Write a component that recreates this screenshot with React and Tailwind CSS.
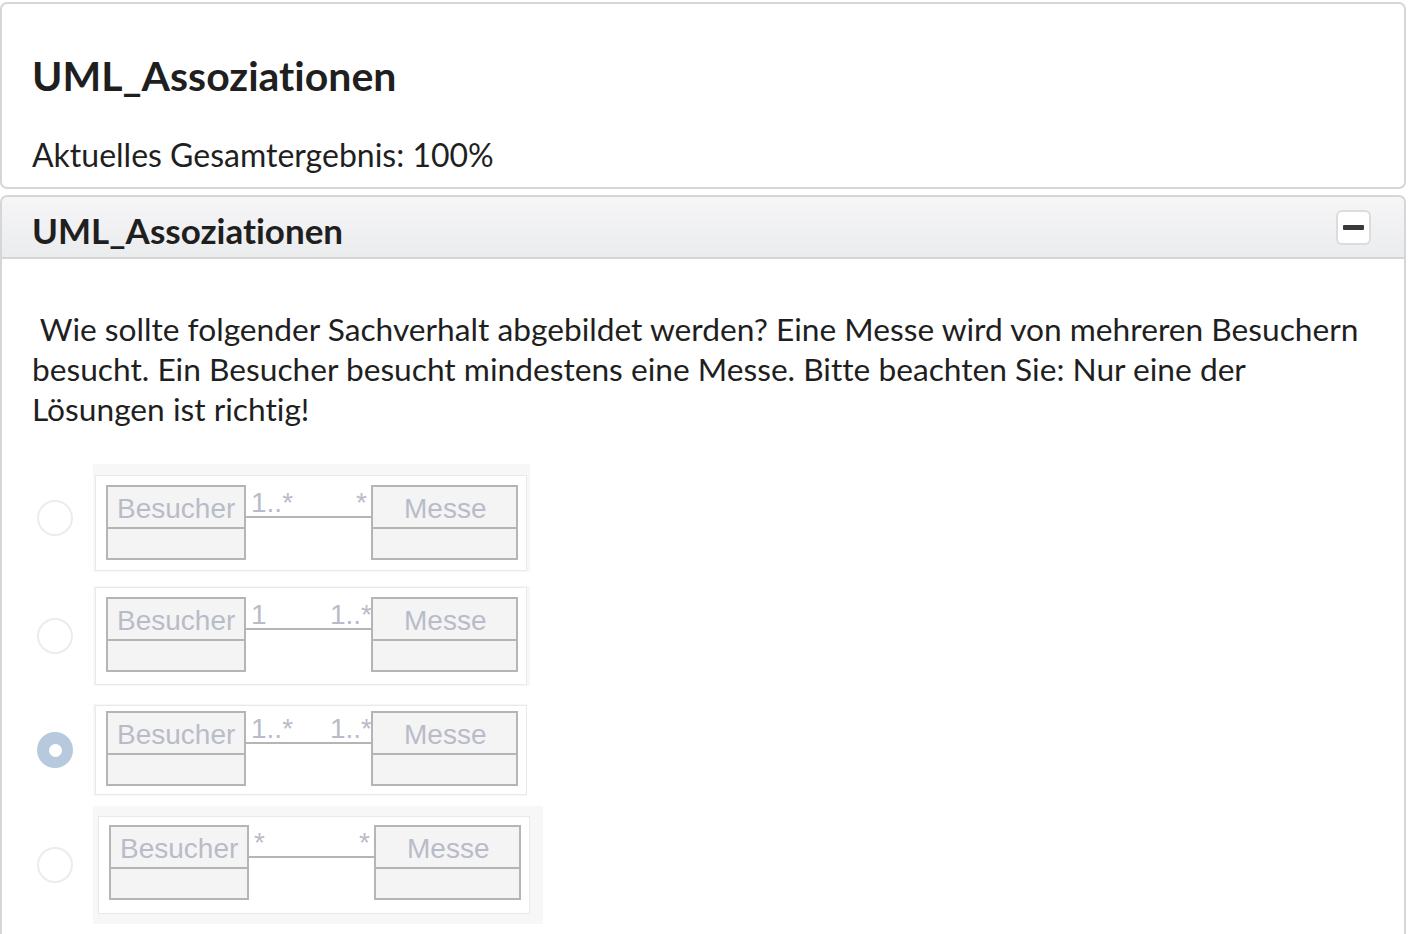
import { useState } from 'react';

const font = 'Liberation Sans, Arial, sans-serif';

const options = [
   { left: '1..*', right: '*', h: 96, boxY: 11, box: 'pt-[11px] pb-[1px] pl-[2px] w-[437px]', mt: 'mt-0' },
   { left: '1', right: '1..*', h: 98, boxY: 11, box: 'pt-[1px] pb-[1px] pl-[2px] w-[437px]', mt: 'mt-[14px]' },
   { left: '1..*', right: '1..*', h: 90, boxY: 7, box: 'pt-[1px] pb-[1px] pl-[2px] w-[434px]', mt: 'mt-[18px]' },
   { left: '*', right: '*', h: 98, boxY: 10, box: 'pt-[10px] pb-[10px] pl-[5px] w-[450px]', mt: 'mt-[10px]' },
];

function Diagram({ left, right, h, boxY }) {
   const y = boxY;
   return (
      <svg width="432" height={h} viewBox={`0 0 432 ${h}`} className="block">
         <rect x="0.5" y="0.5" width="431" height={h - 1} fill="#ffffff" stroke="#e9e9e9" />
         <rect x="12" y={y} width="138" height="73" fill="#f4f4f4" stroke="#b5b5b5" strokeWidth="2" />
         <line x1="12" y1={y + 42} x2="150" y2={y + 42} stroke="#b5b5b5" strokeWidth="2" />
         <rect x="277" y={y} width="145" height="73" fill="#f4f4f4" stroke="#b5b5b5" strokeWidth="2" />
         <line x1="277" y1={y + 42} x2="422" y2={y + 42} stroke="#b5b5b5" strokeWidth="2" />
         <line x1="150" y1={y + 31} x2="277" y2={y + 31} stroke="#b5b5b5" strokeWidth="2" />
         <text x="22" y={y + 32} fontFamily={font} fontSize="28" fill="#b9bcc8">Besucher</text>
         <text x="309" y={y + 32} fontFamily={font} fontSize="28" fill="#b9bcc8">Messe</text>
         <text x="156" y={y + 26} fontFamily={font} fontSize="28" fill="#b9bcc8">{left}</text>
         <text x={right.length > 1 ? 277 : 272} y={y + 26} textAnchor="end" fontFamily={font} fontSize="28" fill="#b9bcc8">{right}</text>
      </svg>
   );
}

function Radio({ checked, onClick }) {
   return (
      <button onClick={onClick} className="w-[36px] h-[36px] shrink-0 rounded-full flex items-center justify-center">
         {checked ? (
            <span className="w-[36px] h-[36px] rounded-full bg-[#b7c9dd] flex items-center justify-center">
               <span className="w-[13px] h-[13px] rounded-full bg-white"></span>
            </span>
         ) : (
            <span className="w-[36px] h-[36px] rounded-full border-2 border-[#ececec] bg-white"></span>
         )}
      </button>
   );
}

export default function App() {
   const [selected, setSelected] = useState(2);
   const [open, setOpen] = useState(true);

   return (
      <div className="w-[1416px] h-[934px] overflow-hidden bg-white text-[#1f1f1f] font-['Lato','Open_Sans',sans-serif] [font-variant-ligatures:none] [font-feature-settings:'liga'_0]">
         <div className="mt-[2px] w-[1406px] h-[187px] border-2 border-[#d6d6d6] rounded-[7px] pl-[30px] pt-[48px]">
            <h1 className="text-[41px] font-bold leading-[48px]">UML_Assoziationen</h1>
            <p className="mt-[36px] text-[32px] leading-[38px]">Aktuelles Gesamtergebnis: 100%</p>
         </div>

         <div className="mt-[6px] w-[1406px]">
            <div className="h-[64px] border-2 border-[#d6d6d6] rounded-t-[7px] bg-gradient-to-b from-[#f6f6f7] to-[#ebecee] flex items-center justify-between pl-[30px] pr-[33px]">
               <h2 className="text-[35px] font-bold leading-[40px] pt-[6px]">UML_Assoziationen</h2>
               <button onClick={() => setOpen(!open)} className="w-[35px] h-[35px] bg-white border-2 border-[#dcdcdc] rounded-[6px] flex items-center justify-center">
                  <span className="w-[21px] h-[5px] rounded-[1px] bg-[#3a3a3a]"></span>
               </button>
            </div>
            {open && (
               <div className="border-x-2 border-[#d6d6d6] h-[700px] pl-[30px] pr-[30px] pt-[50px]">
                  <p className="text-[31.7px] leading-[40px]">&nbsp;Wie sollte folgender Sachverhalt abgebildet werden? Eine Messe wird von mehreren Besuchern besucht. Ein Besucher besucht mindestens eine Messe. Bitte beachten Sie: Nur eine der Lösungen ist richtig!</p>
                  <div className="mt-[35px] flex flex-col">
                     {options.map((o, i) => (
                        <div key={i} className={`flex items-center ${o.mt}`}>
                           <div className="w-[61px] pl-[5px]">
                              <Radio checked={selected === i} onClick={() => setSelected(i)} />
                           </div>
                           <div className={`bg-[#f7f7f7] ${o.box}`}>
                              <Diagram left={o.left} right={o.right} h={o.h} boxY={o.boxY} />
                           </div>
                        </div>
                     ))}
                  </div>
               </div>
            )}
         </div>
      </div>
   );
}
